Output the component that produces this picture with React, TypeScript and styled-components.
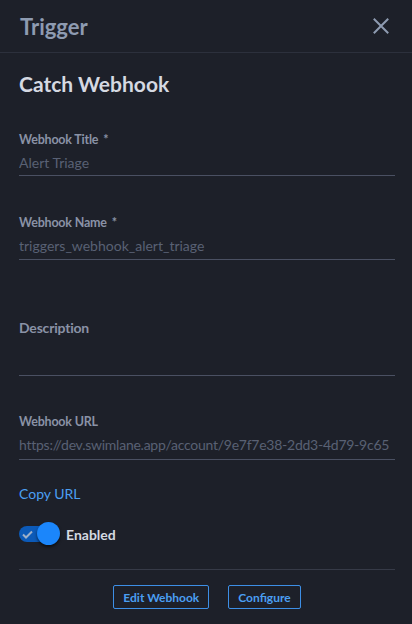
import React from "react";
import styled, { createGlobalStyle } from "styled-components";

const Global = createGlobalStyle`
  html, body { margin: 0; padding: 0; background: #1d2029; }
  body { font-family: Lato, "Noto Sans", sans-serif; }
  * { box-sizing: border-box; }
`;

const Panel = styled.div`
  width: 412px;
  height: 624px;
  background: #1d2029;
  display: flex;
  flex-direction: column;
  overflow: hidden;
`;

const Header = styled.div`
  height: 53px;
  display: flex;
  align-items: center;
  justify-content: space-between;
  padding: 0 20px 0 20px;
  border-bottom: 1px solid #2c303c;
`;

const HeaderTitle = styled.h1`
  margin: 0;
  font-size: 22px;
  font-weight: 700;
  color: #8e9bb1;
`;

const CloseButton = styled.button`
  background: none;
  border: none;
  padding: 0;
  width: 22px;
  height: 22px;
  display: flex;
  align-items: center;
  justify-content: center;
  cursor: pointer;
`;

const Body = styled.div`
  flex: 1;
  display: flex;
  flex-direction: column;
  padding: 19px 17px 0 19px;
`;

const SectionTitle = styled.h2`
  margin: 0 0 36px 0;
  font-size: 21px;
  font-weight: 700;
  color: #d5d9e2;
  line-height: 24px;
`;

const Field = styled.div<{ $gap: number }>`
  display: flex;
  flex-direction: column;
  margin-bottom: ${(p) => p.$gap}px;
`;

const Label = styled.label<{ $big?: boolean }>`
  font-size: ${(p) => (p.$big ? 14 : 12.5)}px;
  font-weight: 700;
  color: #8a92a6;
  line-height: 16px;
  letter-spacing: -0.2px;
`;

const Star = styled.span`
  margin-left: 5px;
`;

const Value = styled.div<{ $h: number; $tight?: boolean }>`
  font-size: 14px;
  color: #596174;
  line-height: 20px;
  height: ${(p) => p.$h}px;
  padding-top: 5px;
  border-bottom: 1px solid #4a5062;
  white-space: nowrap;
  overflow: hidden;
  letter-spacing: ${(p) => (p.$tight ? "-0.25px" : "0")};
`;

const Link = styled.a`
  font-size: 14px;
  color: #4b9ff2;
  text-decoration: none;
  line-height: 18px;
  margin-bottom: 19px;
`;

const ToggleRow = styled.div`
  display: flex;
  align-items: center;
  gap: 7px;
  height: 24px;
`;

const Track = styled.div`
  position: relative;
  width: 38px;
  height: 16px;
  border-radius: 8px;
  background: #0c5ab8;
  display: flex;
  align-items: center;
  padding-left: 3px;
`;

const Knob = styled.div`
  position: absolute;
  right: -3px;
  top: -4px;
  width: 23px;
  height: 23px;
  border-radius: 50%;
  background: #1b86fb;
  box-shadow: 0 2px 3px rgba(0, 0, 0, 0.55);
`;

const ToggleLabel = styled.span`
  font-size: 14px;
  font-weight: 700;
  color: #d5d9e2;
  margin-left: 2px;
`;

const Divider = styled.div`
  height: 1px;
  background: #363a47;
  margin-top: 23px;
`;

const Footer = styled.div`
  display: flex;
  justify-content: center;
  gap: 19px;
  padding-top: 15px;
`;

const OutlineButton = styled.button`
  font-family: Lato, "Noto Sans", sans-serif;
  background: transparent;
  border: 1px solid #3d8fe6;
  border-radius: 2px;
  color: #4b9ff2;
  font-size: 12px;
  font-weight: 700;
  height: 24px;
  padding: 0 9px;
  cursor: pointer;
`;

export default function App() {
  return (
    <>
      <Global />
      <Panel>
        <Header>
          <HeaderTitle>Trigger</HeaderTitle>
          <CloseButton aria-label="Close">
            <svg width="16" height="16" viewBox="0 0 16 16">
              <path d="M1.5 1.5 L14.5 14.5 M14.5 1.5 L1.5 14.5" stroke="#8e9bb1" strokeWidth="2" strokeLinecap="square" />
            </svg>
          </CloseButton>
        </Header>
        <Body>
          <SectionTitle>Catch Webhook</SectionTitle>
          <Field $gap={39}>
            <Label>
              Webhook Title<Star>*</Star>
            </Label>
            <Value $h={28}>Alert Triage</Value>
          </Field>
          <Field $gap={60}>
            <Label>
              Webhook Name<Star>*</Star>
            </Label>
            <Value $h={29}>triggers_webhook_alert_triage</Value>
          </Field>
          <Field $gap={38}>
            <Label $big>Description</Label>
            <Value $h={40}></Value>
          </Field>
          <Field $gap={25}>
            <Label>Webhook URL</Label>
            <Value $h={30} $tight>
              https://dev.swimlane.app/account/9e7f7e38-2dd3-4d79-9c65
            </Value>
          </Field>
          <Link href="#">Copy URL</Link>
          <ToggleRow>
            <Track>
              <svg width="11" height="9" viewBox="0 0 11 9">
                <path d="M1 4.5 L4 7.5 L10 1.5" stroke="#9fb0c8" strokeWidth="2" fill="none" />
              </svg>
              <Knob />
            </Track>
            <ToggleLabel>Enabled</ToggleLabel>
          </ToggleRow>
          <Divider />
          <Footer>
            <OutlineButton>Edit Webhook</OutlineButton>
            <OutlineButton>Configure</OutlineButton>
          </Footer>
        </Body>
      </Panel>
    </>
  );
}
